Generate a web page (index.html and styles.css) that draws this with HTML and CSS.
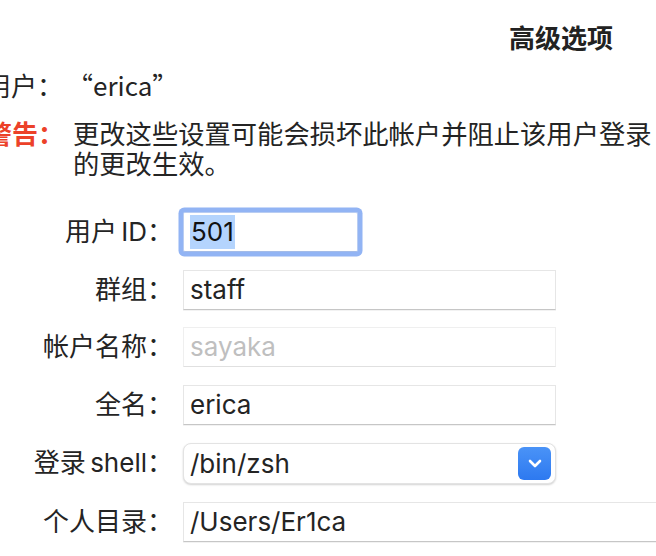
FILE: index.html
```html
<!DOCTYPE html>
<html lang="zh-CN">
<head>
<meta charset="utf-8">
<title>高级选项</title>
<link rel="stylesheet" href="styles.css">
</head>
<body>
<div class="dialog">
  <h1 class="title">高级选项</h1>
  <div class="info">
    <div class="user-line"><span class="user-key">用户：</span><span class="user-val">“erica”</span></div>
    <div class="warning">
      <span class="warn-label">警告：</span>
      <div class="warn-text">
        <span class="line">更改这些设置可能会损坏此帐户并阻止该用户登录</span>
        <span class="line">的更改生效。</span>
      </div>
    </div>
  </div>
  <div class="form">
    <label class="label">用户 ID：</label>
    <div class="field short focused"><span class="selected">501</span></div>

    <label class="label">群组：</label>
    <div class="field">staff</div>

    <label class="label">帐户名称：</label>
    <div class="field disabled">sayaka</div>

    <label class="label">全名：</label>
    <div class="field">erica</div>

    <label class="label">登录 shell：</label>
    <div class="popup">
      <span class="popup-value">/bin/zsh</span>
      <span class="popup-btn">
        <svg width="14" height="9" viewBox="0 0 14 9"><path d="M2 2 L7 7 L12 2" fill="none" stroke="#fff" stroke-width="2.6" stroke-linecap="round" stroke-linejoin="round"/></svg>
      </span>
    </div>

    <label class="label">个人目录：</label>
    <div class="field wide">/Users/Er1ca</div>
  </div>
</div>
</body>
</html>
```

FILE: styles.css
```css
html, body {
  margin: 0;
  padding: 0;
  background: #ffffff;
  overflow: hidden;
}

body {
  width: 656px;
  height: 556px;
  font-family: "Inter", "Noto Sans CJK SC", sans-serif;
  font-size: 26px;
  color: #242424;
}

.dialog {
  display: flex;
  flex-direction: column;
  padding-top: 22px;
}

.title {
  margin: 0;
  align-self: flex-end;
  margin-right: 43px;
  font-size: 26px;
  line-height: 30px;
  font-weight: 700;
  font-family: "Noto Sans CJK SC", sans-serif;
  color: #222;
}

.info {
  display: flex;
  flex-direction: column;
  gap: 18px;
  margin-top: 18px;
}

.user-line {
  display: flex;
  margin-left: -15px;
  font-family: "Noto Sans CJK SC", sans-serif;
  line-height: 30px;
  white-space: nowrap;
}

.user-val {
  margin-left: 4px;
}

.warning {
  display: flex;
  gap: 9px;
  margin-left: -14px;
  line-height: 30px;
  font-family: "Noto Sans CJK SC", sans-serif;
}

.warn-label {
  color: #ec4129;
  font-weight: 700;
  white-space: nowrap;
}

.warn-text {
  display: flex;
  flex-direction: column;
  font-size: 26.3px;
}

.warn-text .line {
  white-space: nowrap;
}

.form {
  display: grid;
  grid-template-columns: 173px 1fr;
  column-gap: 10px;
  row-gap: 17.5px;
  margin-top: 34px;
  align-items: center;
}

.label {
  text-align: right;
  white-space: nowrap;
  line-height: 40px;
  word-spacing: -3px;
}

.field {
  box-sizing: border-box;
  width: 373px;
  height: 40px;
  line-height: 38px;
  padding-left: 6px;
  border: 1px solid #e6e6e6;
  border-bottom-color: #c6c6c6;
  box-shadow: 0 1px 0 rgba(0, 0, 0, 0.05);
  background: #fff;
  white-space: nowrap;
}

.field.disabled {
  color: #bfbfbf;
  border-color: #efefef;
  border-bottom-color: #e0e0e0;
  box-shadow: none;
}

.field.wide {
  width: 520px;
}

.field.short {
  width: 175px;
}

.field.focused {
  border-color: #b9cdf2;
  border-bottom-color: #a3bbe8;
  border-radius: 2px;
  box-shadow: 0 0 0 4.5px #92b4f4;
  display: flex;
  align-items: center;
}

.selected {
  display: inline-block;
  height: 34px;
  line-height: 34px;
  background: #b4d4fd;
  padding: 0 1px;
  color: #111;
}

.popup {
  box-sizing: border-box;
  width: 373px;
  height: 41px;
  margin-top: 1px;
  display: flex;
  align-items: center;
  justify-content: space-between;
  padding: 0 4px 0 6px;
  border: 1px solid #e3e3e3;
  border-radius: 8px;
  box-shadow: 0 1px 2px rgba(0, 0, 0, 0.18);
  background: #fff;
}

.popup-value {
  line-height: 38px;
}

.popup-btn {
  width: 33px;
  height: 33px;
  border-radius: 6px;
  background: linear-gradient(#4a93f7, #2d79f0);
  display: flex;
  align-items: center;
  justify-content: center;
}
```
